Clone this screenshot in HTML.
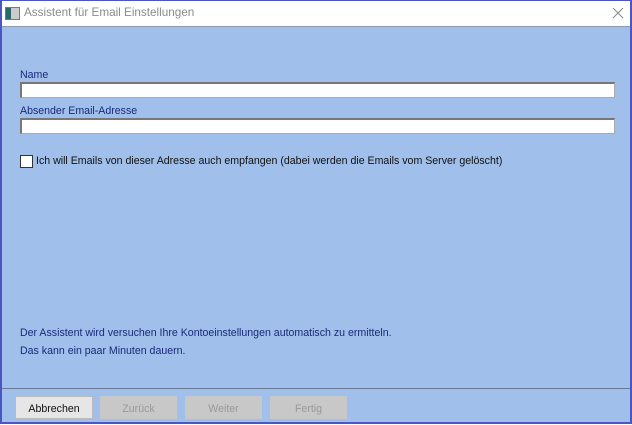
<!DOCTYPE html><html><head><style>
body{margin:0;width:632px;height:425px;overflow:hidden;font-family:"Liberation Sans",sans-serif;font-size:10.6px}
.win{position:absolute;left:0;top:0;width:628px;height:421px;border:2px solid #4a55c8;border-top:1px solid #4a55c8;background:#a0bfea}
.title{position:absolute;left:0;top:0;width:628px;height:25px;background:#fff;border-bottom:1px solid #8a9ab0}
.title span{position:absolute;left:22px;top:5px;font-size:11.7px;color:#8a8a8a}
.ico{position:absolute;left:3px;top:6px;width:13px;height:11px;border:1px solid #777;background:linear-gradient(90deg,#2a6a6a 0 5px,#ccc 5px)}
.lbl{position:absolute;left:18px;color:#1a2a7a}
.inp{position:absolute;left:18px;width:592px;height:13px;background:#fff;border:1px solid #aaa;border-top:2px solid #777;border-left:2px solid #777}
.cb{position:absolute;left:18px;top:154px;width:11px;height:11px;background:#fff;border:1px solid #333}
.sep{position:absolute;left:0;top:387px;width:628px;height:1px;background:#6a7a95}
.btn{position:absolute;top:395px;height:23px;width:77px;background:#c8c8c8;color:#999;text-align:center;line-height:26px;font-size:10.6px}
</style></head><body><div class="win">
<div class="title"><div class="ico"></div><span>Assistent für Email Einstellungen</span>
<svg style="position:absolute;right:6px;top:6px" width="12" height="12"><path d="M1 1L11 11M11 1L1 11" stroke="#888" stroke-width="1"/></svg></div>
<div class="lbl" style="top:68px">Name</div>
<div class="inp" style="top:81px"></div>
<div class="lbl" style="top:104px">Absender Email-Adresse</div>
<div class="inp" style="top:117px"></div>
<div class="cb"></div>
<div class="lbl" style="left:34px;top:154px;color:#111">Ich will Emails von dieser Adresse auch empfangen (dabei werden die Emails vom Server gelöscht)</div>
<div class="lbl" style="top:326px">Der Assistent wird versuchen Ihre Kontoeinstellungen automatisch zu ermitteln.</div>
<div class="lbl" style="top:344px">Das kann ein paar Minuten dauern.</div>
<div class="sep"></div>
<div class="btn" style="left:13px;background:#e6e6e6;color:#111;border:1px solid #bbb;width:76px;height:21px;line-height:24px">Abbrechen</div>
<div class="btn" style="left:98px">Zurück</div>
<div class="btn" style="left:183px">Weiter</div>
<div class="btn" style="left:268px">Fertig</div>
</div></body></html>
